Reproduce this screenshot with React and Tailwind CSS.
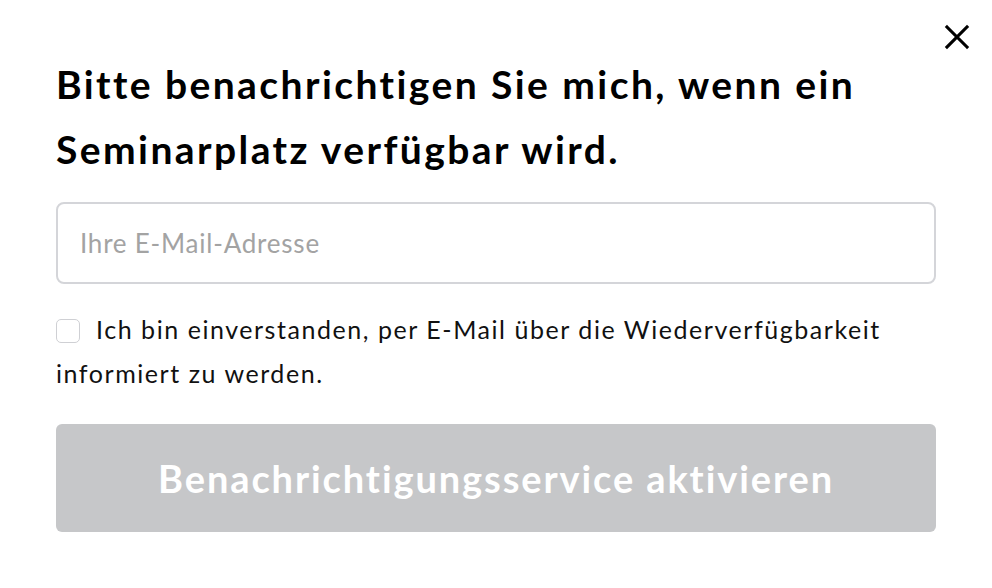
import { useState } from 'react';

export default function App() {
  const [email, setEmail] = useState('');
  const [agreed, setAgreed] = useState(false);

  return (
    <div className="relative w-[992px] h-[588px] bg-white" style={{ fontFamily: 'Lato, "Open Sans", sans-serif' }}>
      {/* Close button */}
      <button className="absolute right-[19px] top-[21px] w-[32px] h-[32px] flex items-center justify-center text-black">
        <svg width="30" height="30" viewBox="0 0 24 24" fill="none" stroke="currentColor" strokeWidth="2.5" strokeLinecap="square">
          <path d="M4 4l16 16M20 4L4 20" />
        </svg>
      </button>

      <div className="px-[56px] pt-[52px]">
        <h2 className="text-[39px] leading-[65px] font-bold text-black tracking-[0.062em]">
          Bitte benachrichtigen Sie mich, wenn ein Seminarplatz verfügbar wird.
        </h2>

        <input
          type="email"
          value={email}
          onChange={(e) => setEmail(e.target.value)}
          placeholder="Ihre E-Mail-Adresse"
          className="mt-[20px] w-full h-[82px] rounded-[8px] border-2 border-[#d4d5d9] px-[22px] text-[26px] tracking-[0.03em] text-gray-800 placeholder:text-[#a3a3a3] outline-none"
        />

        <div className="mt-[23px] text-[25px] leading-[44px] tracking-[0.062em] text-[#111]">
          <label className="cursor-pointer">
            <span
              onClick={() => setAgreed(!agreed)}
              className={`inline-block align-[-4px] w-[24px] h-[24px] mr-[16px] rounded-[5px] border border-[#cfd0d4] ${agreed ? 'bg-gray-800' : 'bg-white'}`}
            />
            Ich bin einverstanden, per E-Mail über die Wiederverfügbarkeit informiert zu werden.
          </label>
        </div>

        <button
          disabled={!email || !agreed}
          className="mt-[29px] w-full h-[108px] rounded-[6px] bg-[#c6c7c9] text-white text-[38px] font-bold tracking-[0.05em]"
        >
          Benachrichtigungsservice aktivieren
        </button>
      </div>
    </div>
  );
}
